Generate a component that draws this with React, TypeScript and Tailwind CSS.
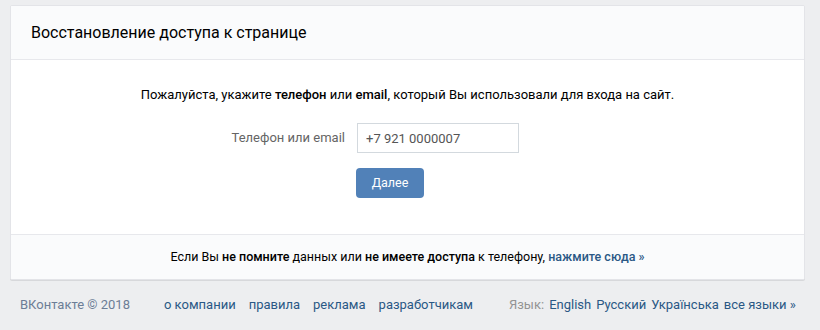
export default function App() {
  return (
    <div className="min-h-[330px] bg-[#edeef0] pt-[5px] font-['Roboto','Liberation_Sans',sans-serif] text-[13px] text-black">
      <div className="ml-[10px] w-[795px] overflow-hidden rounded-[2px] border border-[#e3e4e8] bg-white shadow-[0_1px_0_0_#d7d8db]">
        <div className="flex h-[54px] items-center border-b border-[#e7e8ec] bg-[#fafbfc] pl-[20px] text-[16px]">
          Восстановление доступа к странице
        </div>
        <div className="h-[174px] pt-[26px]">
          <p className="text-center leading-[18px]">
            Пожалуйста, укажите <b className="font-medium">телефон</b> или{" "}
            <b className="font-medium">email</b>, который Вы использовали для входа на сайт.
          </p>
          <div className="mt-[19px] flex items-center">
            <label className="w-[346px] pr-[12px] text-right text-[#656565]">Телефон или email</label>
            <input
              defaultValue="+7 921 0000007"
              className="h-[30px] w-[162px] border border-[#d3d9de] bg-white px-[8px] text-[13px] text-[#555] outline-none"
            />
          </div>
          <div className="mt-[15px] pl-[345px]">
            <button className="h-[30px] w-[68px] rounded-[4px] bg-[#5181b8] text-[12.5px] text-white">
              Далее
            </button>
          </div>
        </div>
        <div className="flex h-[45px] items-center justify-center border-t border-[#e7e8ec] bg-[#fafbfc] text-[12.5px]">
          <span>
            Если Вы <b className="font-medium">не помните</b> данных или{" "}
            <b className="font-medium">не имеете доступа</b> к телефону,{" "}
            <a className="font-medium text-[#2a5885]">нажмите сюда »</a>
          </span>
        </div>
      </div>
      <div className="flex pl-[20px] pt-[15px] text-[13px]">
        <span className="text-[#6c7d96]">ВКонтакте © 2018</span>
        <div className="ml-[34px] flex gap-[13px] text-[#2a5885]">
          <a>о компании</a>
          <a>правила</a>
          <a>реклама</a>
          <a>разработчикам</a>
        </div>
        <div className="ml-[36px] flex gap-[5px] text-[#2a5885]">
          <span className="text-[#939393]">Язык:</span>
          <a>English</a>
          <a>Русский</a>
          <a>Українська</a>
          <a>все языки »</a>
        </div>
      </div>
    </div>
  );
}
